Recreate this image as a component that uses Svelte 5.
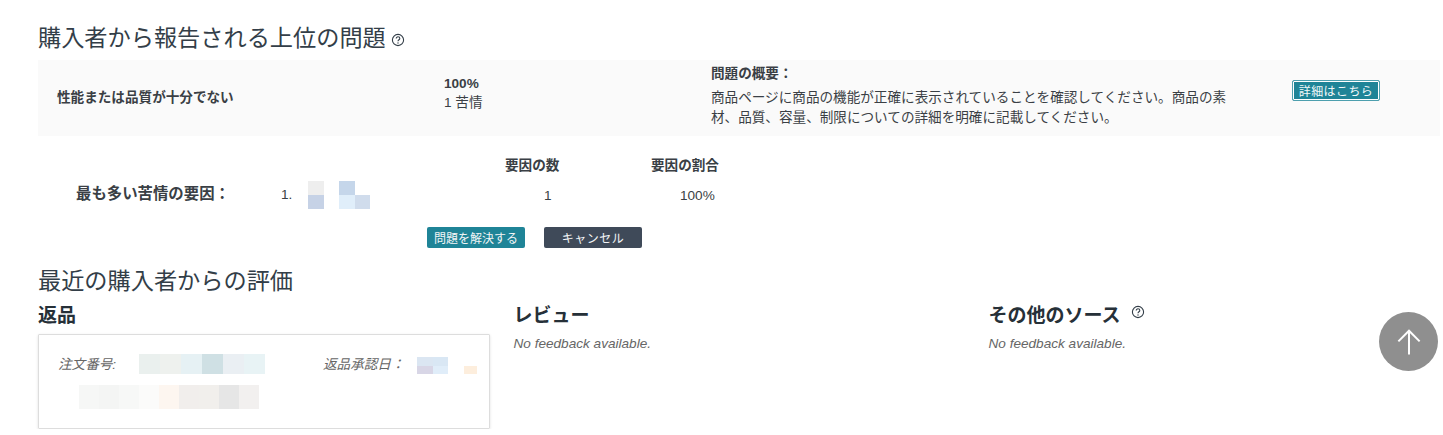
<script>
  const cell = 15.5;
  const factorBlur = [
    ['#eeeeee', '', '#c5d6ea', ''],
    ['#c6d2e6', '', '#e0eefa', '#d0dcec']
  ];
  const orderTop = [['#eaf0ee', '#eef1ee', '#e6f1f4', '#cfe0e4', '#eaeff3', '#e8f3f5']];
  const orderBottom = [['#f6f7f6', '#f4f5f4', '#f7f8f7', '#fbfbfa', '#fdf6f0', '#f1eeec', '#f1efec', '#e6e6e6', '#f2f0ef']];
  const dateBlur = [
    ['#dbe6f2', '#d9e7f4'],
    ['#d8d6e6', '#e0edf9']
  ];
</script>

{#snippet blur(rows, w, h)}
  <span class="blur" style="grid-template-columns: repeat({rows[0].length}, {w}px); grid-auto-rows: {h}px;">
    {#each rows as row}
      {#each row as c}
        <i style="background: {c || 'transparent'};"></i>
      {/each}
    {/each}
  </span>
{/snippet}

{#snippet help()}
  <svg class="help" viewBox="0 0 14 14" width="14" height="14" aria-hidden="true">
    <circle cx="7" cy="7" r="5.6" fill="none" stroke="#333e48" stroke-width="1.1" />
    <path d="M5.2 5.6c0-1.1.8-1.8 1.8-1.8s1.8.7 1.8 1.6c0 1.3-1.8 1.4-1.8 2.8" fill="none" stroke="#333e48" stroke-width="1.1" />
    <circle cx="7" cy="10" r=".7" fill="#333e48" />
  </svg>
{/snippet}

<main class="page">
  <h2 class="title"><span class="title-text">購入者から報告される上位の問題</span>{@render help()}</h2>

  <section class="issue">
    <div class="issue-name">性能または品質が十分でない</div>
    <div class="issue-share">
      <strong>100%</strong>
      <span>1 苦情</span>
    </div>
    <div class="issue-summary">
      <strong>問題の概要：</strong>
      <p>商品ページに商品の機能が正確に表示されていることを確認してください。商品の素材、品質、容量、制限についての詳細を明確に記載してください。</p>
    </div>
    <div class="issue-action"><button class="details">詳細はこちら</button></div>
  </section>

  <section class="factors">
    <div class="factor-label">最も多い苦情の要因：</div>
    <div class="factor-item">
      <span>1.</span>
      {@render blur(factorBlur, cell, 14)}
    </div>
    <div class="factor-count">
      <strong>要因の数</strong>
      <span>1</span>
    </div>
    <div class="factor-rate">
      <strong>要因の割合</strong>
      <span>100%</span>
    </div>
  </section>

  <div class="actions">
    <button class="btn teal">問題を解決する</button>
    <button class="btn dark">キャンセル</button>
  </div>

  <h2 class="title second">最近の購入者からの評価</h2>

  <section class="columns">
    <div>
      <h3>返品</h3>
      <div class="card">
        <div class="card-row">
          <em class="order-label">注文番号:</em>
          {@render blur(orderTop, 21, 20)}
          <em class="date-label">返品承認日：</em>
          {@render blur(dateBlur, 15.5, 8.5)}
          <i class="speck"></i>
        </div>
        <div class="card-second">
          {@render blur(orderBottom, 20, 24)}
        </div>
      </div>
    </div>
    <div>
      <h3>レビュー</h3>
      <p class="empty">No feedback available.</p>
    </div>
    <div>
      <h3>その他のソース {@render help()}</h3>
      <p class="empty">No feedback available.</p>
    </div>
  </section>
</main>

<button class="top" aria-label="トップへ戻る">
  <svg viewBox="0 0 24 24" width="30" height="30" fill="none" stroke="#fff" stroke-width="1.6">
    <path d="M12 22V3M3.5 11.5 12 3l8.5 8.5" />
  </svg>
</button>

<style>
  :global(body) {
    margin: 0;
    background: #fff;
    font-family: "Liberation Sans", "Noto Sans CJK JP", sans-serif;
    color: #3a3f45;
    font-size: 13.6px;
    overflow: hidden;
  }
  .page {
    padding: 22px 3px 0 38px;
  }
  .title {
    margin: 0;
    font-size: 23.2px;
    line-height: 33px;
    font-weight: 400;
    color: #333e48;
  }
  .title .help {
    vertical-align: -1px;
    margin-left: 5px;
  }
  .issue {
    margin-top: 5px;
    height: 76px;
    background: #fafafa;
    display: grid;
    grid-template-columns: 387px 267px 581px 1fr;
    padding-left: 19px;
    box-sizing: border-box;
    align-items: center;
  }
  .issue-name {
    font-weight: 700;
    margin-top: -4px;
  }
  .issue-share {
    display: flex;
    flex-direction: column;
    line-height: 19px;
    margin-top: -10px;
  }
  .issue-summary {
    align-self: start;
    padding-top: 5px;
  }
  .issue-summary strong {
    display: block;
    line-height: 18px;
  }
  .issue-summary p {
    margin: 5px 0 0;
    width: 520px;
    line-height: 19.5px;
  }
  .issue-action {
    align-self: start;
    padding-top: 20px;
  }
  .details {
    display: block;
    width: 88px;
    height: 21px;
    padding: 0;
    background: #1f8497;
    color: #f2f8f9;
    border: 1px solid #4d9fae;
    outline: 1px solid #fff;
    outline-offset: -2px;
    border-radius: 2px;
    font: inherit;
    font-size: 12px;
    letter-spacing: .4px;
  }
  .factors {
    display: grid;
    grid-template-columns: 205px 224px 146px 1fr;
    padding: 22px 0 0 38px;
    height: 91px;
    box-sizing: border-box;
  }
  .factor-label {
    font-size: 15.4px;
    font-weight: 700;
    padding-top: 25px;
    line-height: 22px;
  }
  .factor-item {
    display: flex;
    align-items: flex-start;
    gap: 16px;
    padding-top: 30px;
    line-height: 14px;
  }
  .factor-item :global(.blur) {
    margin-top: -7px;
  }
  .factor-count,
  .factor-rate {
    display: flex;
    flex-direction: column;
    line-height: 16px;
    gap: 14px;
  }
  .factor-count span {
    padding-left: 39px;
  }
  .factor-rate span {
    padding-left: 29px;
  }
  .actions {
    display: flex;
    gap: 19px;
    margin: 0 0 0 389px;
  }
  .btn {
    width: 98px;
    height: 21px;
    padding: 0;
    border: 0;
    border-radius: 2px;
    color: #f2f5f6;
    font: inherit;
    font-size: 12px;
    letter-spacing: 0;
  }
  .teal {
    background: #1f8497;
  }
  .dark {
    background: #3f4a59;
    letter-spacing: .5px;
  }
  .second {
    margin-top: 17px;
  }
  .columns {
    display: grid;
    grid-template-columns: 475.5px 475px 1fr;
    margin-top: 5px;
  }
  h3 {
    margin: 0;
    font-size: 19px;
    line-height: 26px;
    font-weight: 700;
    color: #263038;
  }
  h3 .help {
    vertical-align: 3px;
    margin-left: 5px;
  }
  .empty {
    margin: 7px 0 0;
    font-size: 13.6px;
    font-style: italic;
    line-height: 16px;
    color: #666;
  }
  .card {
    margin-top: 5px;
    width: 452px;
    height: 95px;
    box-sizing: border-box;
    border: 1px solid #ddd;
    box-shadow: 0 1px 3px rgba(0, 0, 0, .12);
    border-radius: 1px;
    padding: 19px 0 0 19px;
    position: relative;
  }
  .card em {
    font-size: 13.6px;
    color: #666;
    font-style: italic;
    line-height: 20px;
    padding-top: 1px;
  }
  .card-row {
    display: flex;
    align-items: flex-start;
  }
  .order-label {
    width: 81px;
  }
  .date-label {
    margin-left: 58px;
    width: 94px;
  }
  .card-row > :global(.blur:nth-of-type(2)) {
    margin-top: 3px;
  }
  .speck {
    width: 13px;
    height: 8px;
    background: #fdeedd;
    margin: 12px 0 0 16px;
  }
  .card-second {
    margin: 10px 0 0 21px;
  }
  .blur {
    display: inline-grid;
    flex: none;
    vertical-align: top;
  }
  .blur i {
    display: block;
  }
  .top {
    position: fixed;
    left: 1379px;
    top: 312px;
    width: 59px;
    height: 59px;
    border-radius: 50%;
    border: 0;
    padding: 0;
    background: #8f8f8f;
    display: flex;
    align-items: center;
    justify-content: center;
  }
</style>
